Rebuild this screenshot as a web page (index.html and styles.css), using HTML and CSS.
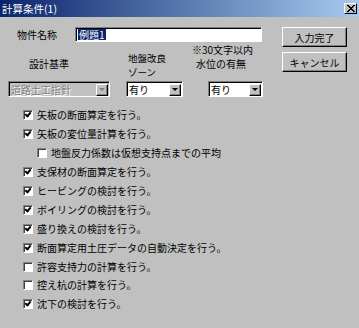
FILE: index.html
```html
<!DOCTYPE html>
<html lang="ja">
<head>
    <meta charset="UTF-8">
    <title>計算条件(1)</title>
    <link rel="stylesheet" href="styles.css">
</head>
<body>
    <div class="window">
        <div class="titlebar">
            <span class="title">計算条件(1)</span>
            <span class="close">
                <svg width="9" height="7" viewBox="0 0 9 7"><path d="M1 0 L8 7 M2 0 L9 7 M8 0 L1 7 M9 0 L2 7" stroke="#000" stroke-width="1"/></svg>
            </span>
        </div>

        <div class="content">
            <div class="top">
                <div class="fields">
                    <div class="name-row">
                        <span class="name-label">物件名称</span>
                        <div class="textbox"><span class="sel">例題1</span></div>
                    </div>
                    <div class="note">※30文字以内</div>

                    <div class="combo-grid">
                        <div class="lbl lbl-std">設計基準</div>
                        <div class="lbl lbl-zone"><span>地盤改良</span><span>ゾーン</span></div>
                        <div class="lbl lbl-water col3">水位の有無</div>

                        <div class="combo disabled">
                            <span class="combo-text">道路土工指針</span>
                            <span class="combo-btn"><i class="arrow"></i></span>
                        </div>
                        <div class="combo">
                            <span class="combo-text">有り</span>
                            <span class="combo-btn"><i class="arrow"></i></span>
                        </div>
                        <div class="combo col3">
                            <span class="combo-text">有り</span>
                            <span class="combo-btn"><i class="arrow"></i></span>
                        </div>
                    </div>
                </div>

                <div class="actions">
                    <button type="button" class="btn">入力完了</button>
                    <button type="button" class="btn">キャンセル</button>
                </div>
            </div>

            <ul class="checks">
                <li><span class="box on"></span>矢板の断面算定を行う。</li>
                <li><span class="box on"></span>矢板の変位量計算を行う。</li>
                <li class="sub"><span class="box"></span>地盤反力係数は仮想支持点までの平均</li>
                <li><span class="box on"></span>支保材の断面算定を行う。</li>
                <li><span class="box on"></span>ヒービングの検討を行う。</li>
                <li><span class="box on"></span>ボイリングの検討を行う。</li>
                <li><span class="box on"></span>盛り換えの検討を行う。</li>
                <li><span class="box on"></span>断面算定用土圧データの自動決定を行う。</li>
                <li><span class="box"></span>許容支持力の計算を行う。</li>
                <li><span class="box"></span>控え杭の計算を行う。</li>
                <li><span class="box on"></span>沈下の検討を行う。</li>
            </ul>
        </div>
    </div>
</body>
</html>
```

FILE: styles.css
```css
/* Classic dialog look */
body {
    margin: 0;
    background-color: #c0c0c0;
    font-family: "MS UI Gothic", "Noto Sans CJK JP", sans-serif;
    font-size: 10px;
    color: #000;
}

.window {
    width: 359px;
    height: 328px;
    background-color: #c0c0c0;
}

.titlebar {
    height: 17px;
    display: flex;
    align-items: center;
    justify-content: space-between;
    padding: 0 2px 0 2px;
    background: linear-gradient(to right, #0a246a, #a6caf0);
    color: #fff;
}

.title {
    font-size: 10.5px;
    line-height: 12px;
}

.close {
    width: 13px;
    height: 11px;
    display: flex;
    align-items: center;
    justify-content: center;
    background-color: #c0c0c0;
    box-sizing: border-box;
    border-top: 1px solid #fff;
    border-left: 1px solid #fff;
    border-right: 1px solid #000;
    border-bottom: 1px solid #000;
}

.content {
    padding-top: 10px;
}

.top {
    display: grid;
    grid-template-columns: 282px 65px;
}

/* name field */
.name-row {
    display: flex;
    align-items: center;
    height: 15px;
    padding-left: 17px;
}

.name-label {
    width: 58px;
}

.textbox {
    width: 187px;
    height: 15px;
    box-sizing: border-box;
    background: #fff;
    border-top: 1px solid #808080;
    border-left: 1px solid #808080;
    border-right: 1px solid #fff;
    border-bottom: 1px solid #fff;
    box-shadow: inset 1px 1px 0 #000;
    padding: 1px 0 0 2px;
    line-height: 11px;
}

.sel {
    display: inline-block;
    background-color: #0a246a;
    color: #fff;
    padding: 0 1px;
}

.note {
    margin-top: 2px;
    line-height: 12px;
    text-align: right;
    padding-right: 29px;
}

/* combos */
.combo-grid {
    display: grid;
    grid-template-columns: 102px 57px 64px;
    grid-template-rows: 25px 16px;
    column-gap: 16px;
    padding-left: 8px;
}

.col3 {
    margin-left: 9px;
}

.lbl {
    line-height: 12px;
}

.lbl-std {
    padding: 2px 0 0 21px;
}

.lbl-zone {
    display: flex;
    flex-direction: column;
    margin-top: -5px;
    padding-left: 2px;
    font-size: 9.5px;
    line-height: 14px;
}

.lbl-water {
    margin-left: -3px;
    padding-top: 2px;
}

.combo {
    display: flex;
    align-items: center;
    height: 16px;
    box-sizing: border-box;
    background: #fff;
    border-top: 1px solid #808080;
    border-left: 1px solid #808080;
    border-right: 1px solid #fff;
    border-bottom: 1px solid #fff;
    box-shadow: inset 1px 1px 0 #000;
    padding: 1px 1px 0 2px;
}

.combo-text {
    flex: 1;
    line-height: 12px;
}

.combo-btn {
    width: 12px;
    height: 12px;
    box-sizing: border-box;
    display: flex;
    align-items: center;
    justify-content: center;
    background: #c0c0c0;
    border-top: 1px solid #fff;
    border-left: 1px solid #fff;
    border-right: 1px solid #000;
    border-bottom: 1px solid #000;
    box-shadow: inset -1px -1px 0 #808080;
}

.arrow {
    width: 0;
    height: 0;
    border-left: 3px solid transparent;
    border-right: 3px solid transparent;
    border-top: 3px solid #000;
}

.combo.disabled {
    background: #c0c0c0;
}

.combo.disabled .combo-text {
    color: #808080;
    text-shadow: 1px 1px 0 #fff;
}

.combo.disabled .arrow {
    border-top-color: #808080;
}

/* buttons */
.actions {
    display: flex;
    flex-direction: column;
    gap: 5px;
}

.btn {
    height: 20px;
    width: 65px;
    padding: 0;
    font-family: inherit;
    font-size: 10px;
    color: #000;
    background: #c0c0c0;
    border-top: 1px solid #fff;
    border-left: 1px solid #fff;
    border-right: 1px solid #000;
    border-bottom: 1px solid #000;
    box-shadow: inset -1px -1px 0 #808080;
}

/* checkbox list */
.checks {
    list-style: none;
    margin: 9px 0 0 0;
    padding: 0 0 0 23px;
}

.checks li {
    display: flex;
    align-items: center;
    height: 18.9px;
    line-height: 12px;
}

.checks li.sub {
    padding-left: 14px;
}

.box {
    width: 10px;
    height: 10px;
    box-sizing: border-box;
    margin-right: 4px;
    background: #fff;
    border-top: 1px solid #808080;
    border-left: 1px solid #808080;
    border-right: 1px solid #fff;
    border-bottom: 1px solid #fff;
    box-shadow: inset 1px 1px 0 #404040;
    position: relative;
}

.box.on::after {
    content: "";
    position: absolute;
    left: 2px;
    top: 0px;
    width: 2px;
    height: 4px;
    border-right: 2px solid #000;
    border-bottom: 2px solid #000;
    transform: rotate(40deg);
}
```
